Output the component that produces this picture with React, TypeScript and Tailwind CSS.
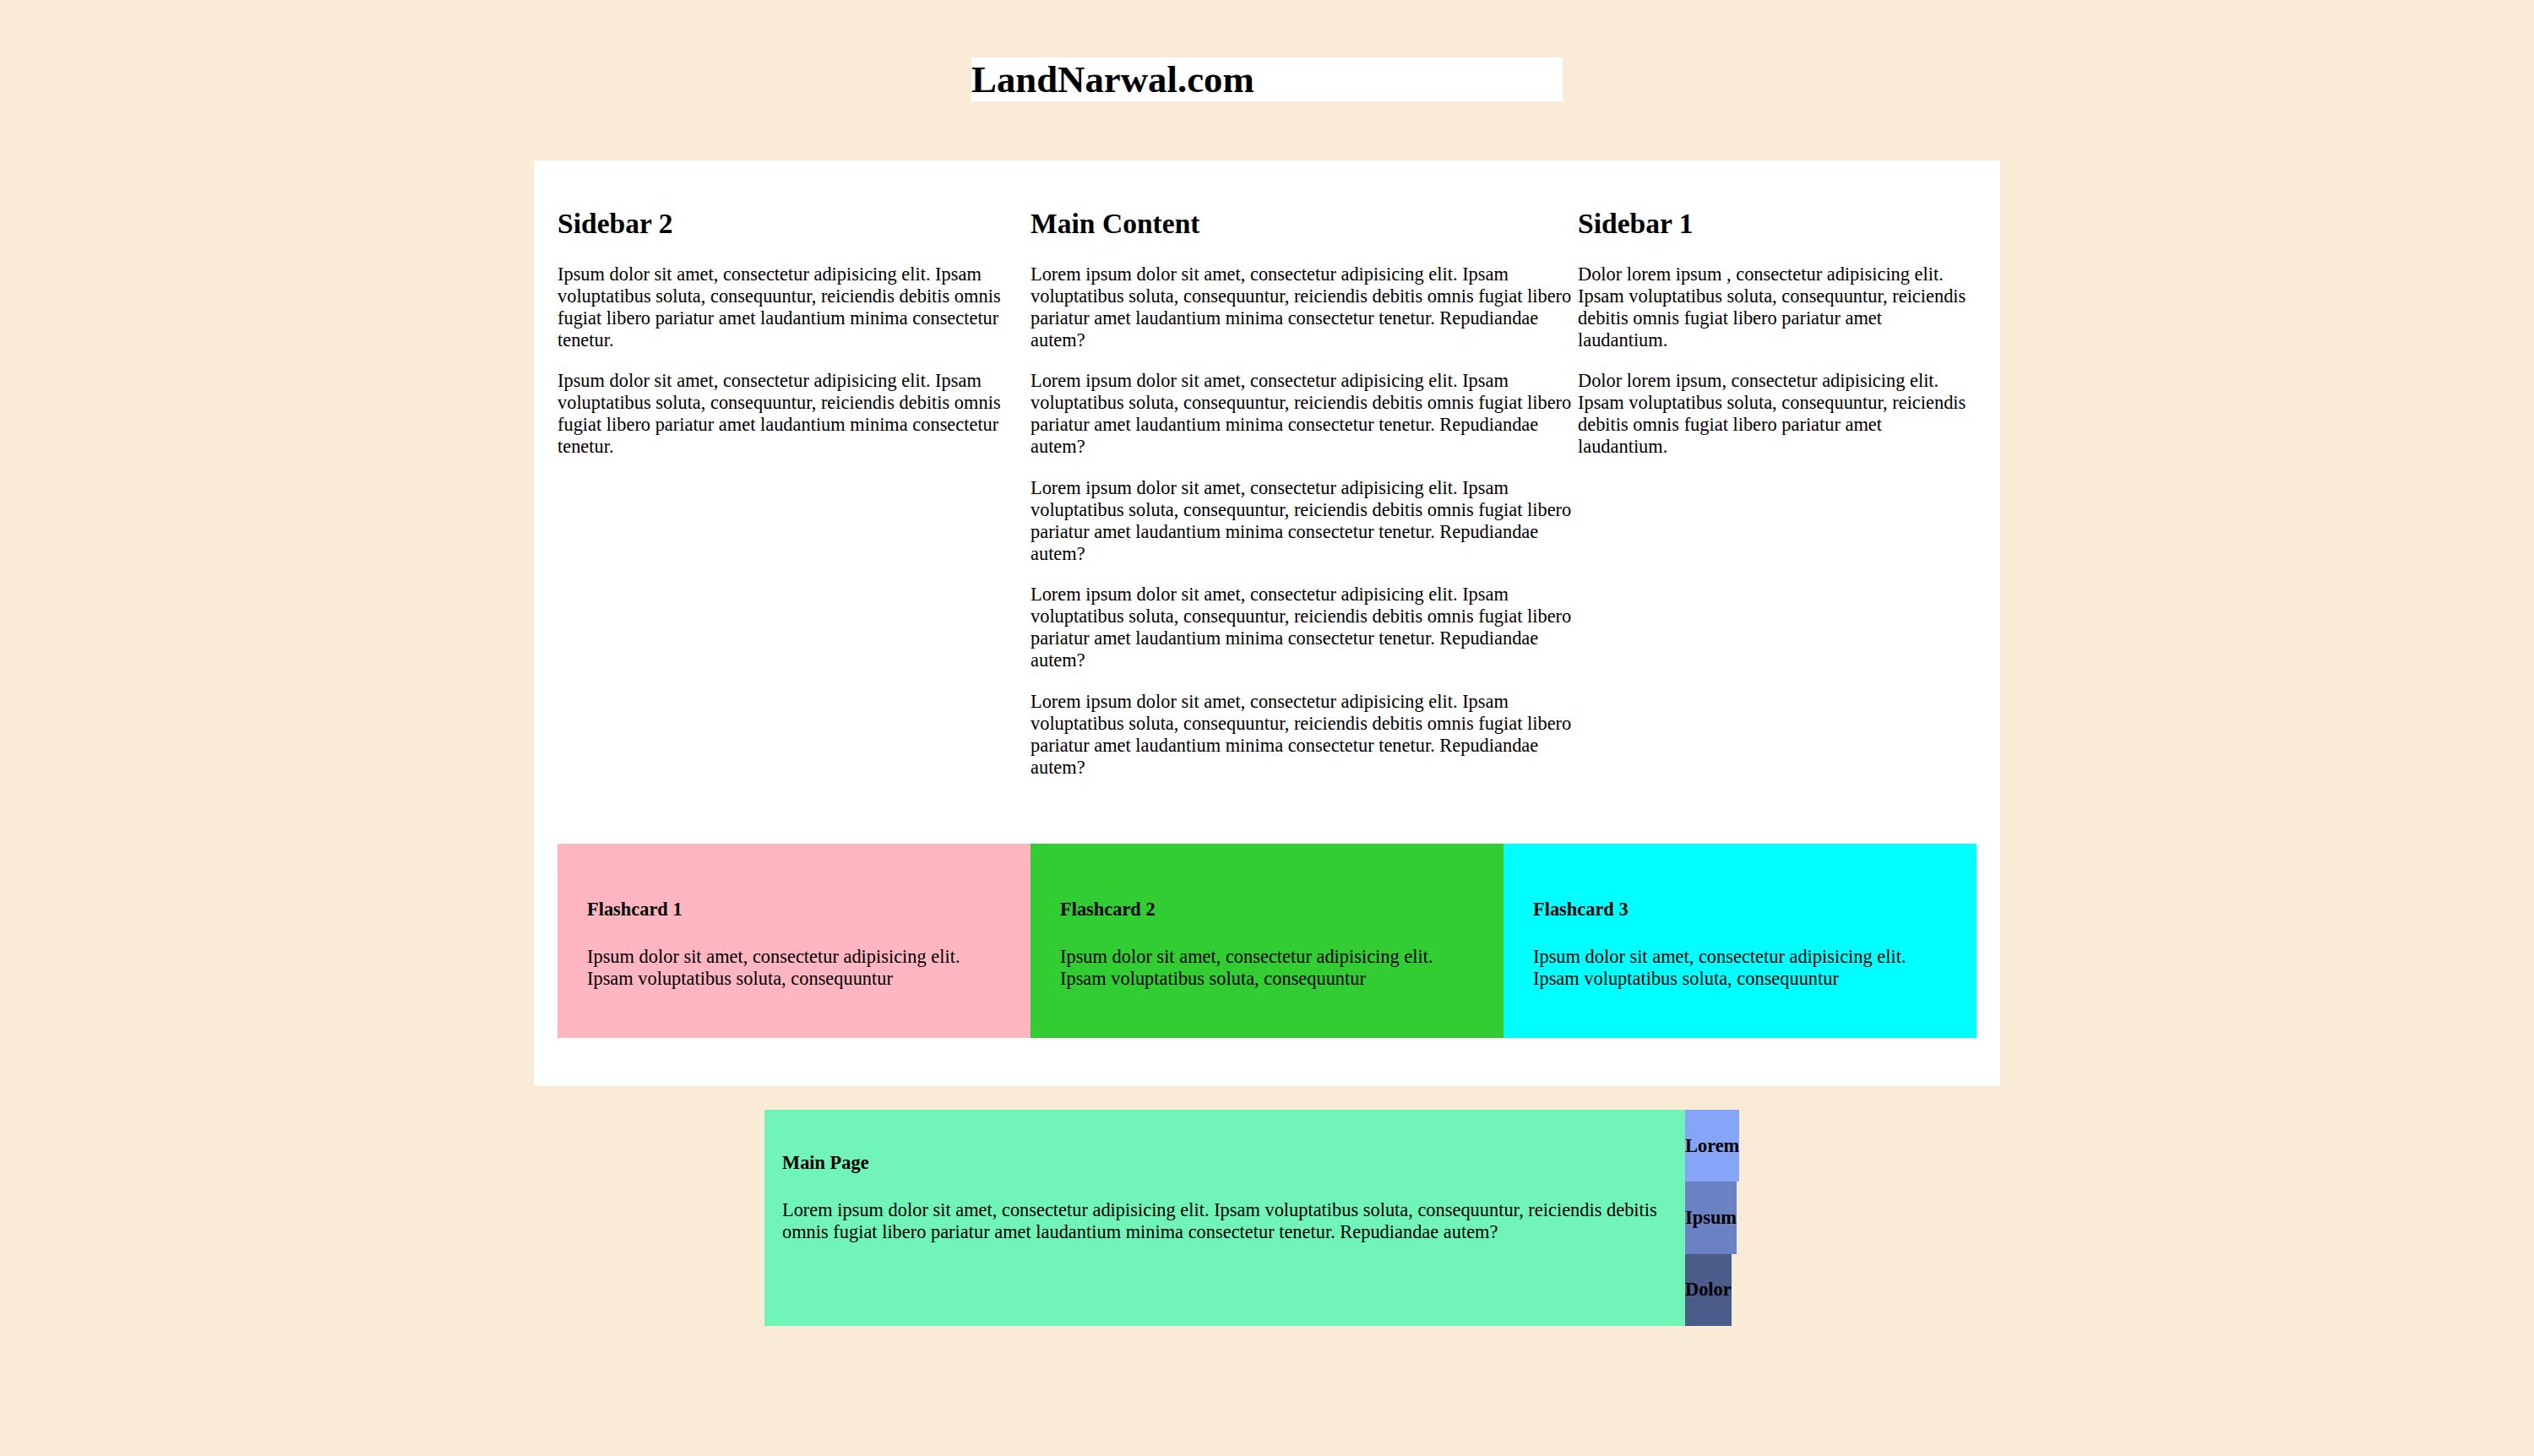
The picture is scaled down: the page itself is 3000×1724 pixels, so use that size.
const serif = "font-['Liberation_Serif','Times_New_Roman',serif] text-black";

const sidebarTwo = [
  "Ipsum dolor sit amet, consectetur adipisicing elit. Ipsam voluptatibus soluta, consequuntur, reiciendis debitis omnis fugiat libero pariatur amet laudantium minima consectetur tenetur.",
  "Ipsum dolor sit amet, consectetur adipisicing elit. Ipsam voluptatibus soluta, consequuntur, reiciendis debitis omnis fugiat libero pariatur amet laudantium minima consectetur tenetur.",
];

const mainText =
  "Lorem ipsum dolor sit amet, consectetur adipisicing elit. Ipsam voluptatibus soluta, consequuntur, reiciendis debitis omnis fugiat libero pariatur amet laudantium minima consectetur tenetur. Repudiandae autem?";

const sidebarOne = [
  "Dolor lorem ipsum , consectetur adipisicing elit. Ipsam voluptatibus soluta, consequuntur, reiciendis debitis omnis fugiat libero pariatur amet laudantium.",
  "Dolor lorem ipsum, consectetur adipisicing elit. Ipsam voluptatibus soluta, consequuntur, reiciendis debitis omnis fugiat libero pariatur amet laudantium.",
];

const flashcards = [
  { title: "Flashcard 1", color: "bg-[#ffb6c1]" },
  { title: "Flashcard 2", color: "bg-[#32cd32]" },
  { title: "Flashcard 3", color: "bg-[#00ffff]" },
];

const nav = [
  { label: "Lorem", color: "bg-[#87a5f8]" },
  { label: "Ipsum", color: "bg-[#6a81c4]" },
  { label: "Dolor", color: "bg-[#4b5b8a]" },
];

function Column({ title, paras }: { title: string; paras: string[] }) {
  return (
    <div>
      <h2 className="text-[33.6px] font-bold leading-[normal] mt-[28px] mb-[28px]">{title}</h2>
      {paras.map((p, i) => (
        <p key={i} className="text-[22.4px] leading-[normal] my-[22.4px]">
          {p}
        </p>
      ))}
    </div>
  );
}

export default function App() {
  return (
    <div className={`min-h-[1724px] bg-[#faebd7] pt-[68px] ${serif}`}>
      <h1 className="w-[700px] mx-auto bg-white text-[44.8px] font-bold leading-[normal]">
        LandNarwal.com
      </h1>

      <div className="w-[1736px] mx-auto mt-[70px] bg-white px-[28px] pt-[28px] pb-[57px]">
        <div className="grid grid-cols-[560px_648px_464px]">
          <Column title="Sidebar 2" paras={sidebarTwo} />
          <Column title="Main Content" paras={[mainText, mainText, mainText, mainText, mainText]} />
          <Column title="Sidebar 1" paras={sidebarOne} />
        </div>

        <div className="grid grid-cols-3 mt-[55px]">
          {flashcards.map((f) => (
            <div key={f.title} className={`${f.color} p-[35px]`}>
              <h4 className="text-[22.4px] font-bold leading-[normal] my-[29.8px]">{f.title}</h4>
              <p className="text-[22.4px] leading-[normal] my-[22.4px]">
                Ipsum dolor sit amet, consectetur adipisicing elit. Ipsam voluptatibus soluta, consequuntur
              </p>
            </div>
          ))}
        </div>
      </div>

      <div className="w-[1190px] mx-auto mt-[28px] flex">
        <div className="w-[1090px] h-[256px] bg-[#71f4b7] px-[21px] pt-[20px]">
          <h4 className="text-[22.4px] font-bold leading-[normal] my-[29.8px]">Main Page</h4>
          <p className="text-[22.4px] leading-[normal] my-[22.4px]">{mainText}</p>
        </div>
        <div className="flex flex-col items-start h-[256px]">
          {nav.map((n) => (
            <div
              key={n.label}
              className={`${n.color} flex-1 flex items-center text-[22.4px] font-bold leading-[normal]`}
            >
              {n.label}
            </div>
          ))}
        </div>
      </div>
    </div>
  );
}
